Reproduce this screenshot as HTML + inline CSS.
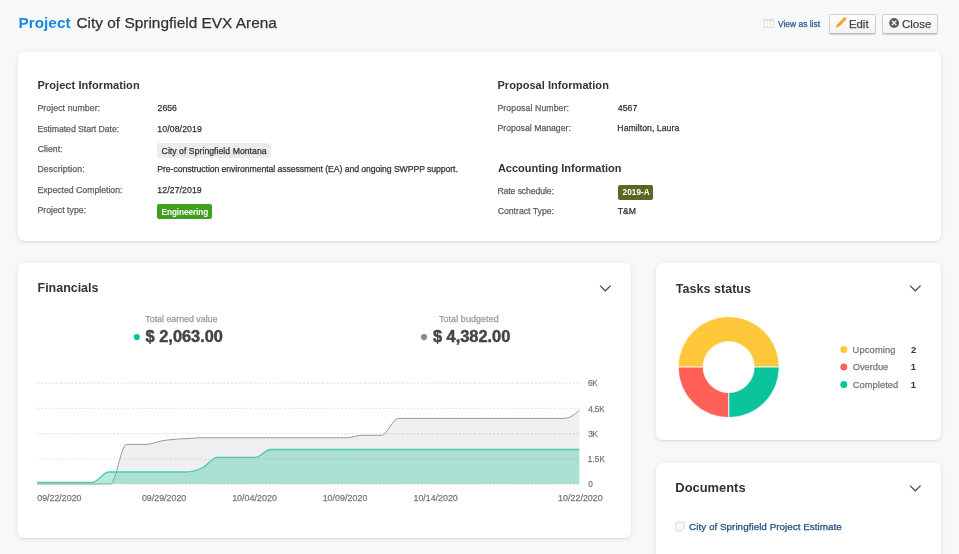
<!DOCTYPE html>
<html><head><meta charset="utf-8"><style>
html,body{margin:0;padding:0;}
body{width:959px;height:554px;overflow:hidden;background:#f8f8f8;position:relative;font-family:"Liberation Sans",sans-serif;}
.card{position:absolute;background:#fff;border-radius:6px;box-shadow:0 1px 2px rgba(0,0,0,0.07),0 1px 6px rgba(0,0,0,0.07);}
.t{position:absolute;white-space:nowrap;}
.r{-webkit-text-stroke:0.25px currentColor;}
#tx{position:absolute;left:0;top:0;width:959px;height:554px;will-change:transform;}
.btn{position:absolute;box-sizing:border-box;border:1px solid #cfcfcf;border-bottom-color:#bdbdbd;border-radius:2px;background:linear-gradient(#fdfdfd,#f3f3f3);box-shadow:0 1px 1px rgba(0,0,0,0.15);}
.badge{position:absolute;border-radius:2px;}
svg{position:absolute;left:0;top:0;}
</style></head><body>
<div class="card" style="left:18px;top:52px;width:923px;height:189px;"></div>
<div class="card" style="left:18px;top:263px;width:613px;height:275px;"></div>
<div class="card" style="left:656px;top:263px;width:285px;height:177px;"></div>
<div class="card" style="left:656px;top:463px;width:285px;height:120px;"></div>
<div class="btn" style="left:829px;top:14px;width:47px;height:19.6px;"></div>
<div class="btn" style="left:882px;top:14px;width:56px;height:19.6px;"></div>
<div class="badge" style="left:157px;top:143px;width:113.5px;height:15px;background:#ececec;"></div>
<div class="badge" style="left:157px;top:204px;width:55px;height:15px;background:#41a01f;"></div>
<div class="badge" style="left:618px;top:184.5px;width:35px;height:15px;background:#5d6625;"></div>
<svg width="959" height="554" viewBox="0 0 959 554">
<path d="M37,484 C61.47,484.00 85.93,484.00 110.4,484 C115.77,484.00 121.13,444.40 126.5,444.4 C133.00,444.40 139.50,444.40 146,444.4 C151.67,444.40 157.33,441.50 163,440.6 C172.67,439.07 182.33,438.94 192,438.3 C194.67,438.12 197.33,437.80 200,437.8 C248.77,437.80 297.53,437.80 346.3,437.8 C351.53,437.80 356.77,435.30 362,435.3 C368.43,435.30 374.87,435.30 381.3,435.3 C387.03,435.30 392.77,418.40 398.5,418.4 C453.57,418.40 508.63,418.40 563.7,418.4 C570,418.4 574,415 579.3,410.3 L579.3,484 L37,484 Z" fill="#efefef"/>
<path d="M37,484 C61.47,484.00 85.93,484.00 110.4,484 C115.77,484.00 121.13,444.40 126.5,444.4 C133.00,444.40 139.50,444.40 146,444.4 C151.67,444.40 157.33,441.50 163,440.6 C172.67,439.07 182.33,438.94 192,438.3 C194.67,438.12 197.33,437.80 200,437.8 C248.77,437.80 297.53,437.80 346.3,437.8 C351.53,437.80 356.77,435.30 362,435.3 C368.43,435.30 374.87,435.30 381.3,435.3 C387.03,435.30 392.77,418.40 398.5,418.4 C453.57,418.40 508.63,418.40 563.7,418.4 C570,418.4 574,415 579.3,410.3 " fill="none" stroke="#9a9a9a" stroke-width="1"/>
<path d="M37,482.5 C55.40,482.50 73.80,482.50 92.2,482.5 C97.73,482.50 103.27,472.00 108.8,472 C134.37,472.00 159.93,472.00 185.5,472 C191.33,472.00 197.17,470.50 203,467.5 C207.67,465.10 212.33,457.30 217,457.3 C229.80,457.30 242.60,457.30 255.4,457.3 C260.43,457.30 265.47,449.50 270.5,449.5 C373.43,449.50 476.37,449.50 579.3,449.5 L579.3,484 L37,484 Z" fill="rgba(50,200,165,0.36)"/>
<line x1="37" y1="383.1" x2="579.5" y2="383.1" stroke="rgba(0,0,0,0.10)" stroke-width="1.2" stroke-dasharray="2.2,1.6"/><line x1="37" y1="408.4" x2="579.5" y2="408.4" stroke="rgba(0,0,0,0.10)" stroke-width="1.2" stroke-dasharray="2.2,1.6"/><line x1="37" y1="433.7" x2="579.5" y2="433.7" stroke="rgba(0,0,0,0.10)" stroke-width="1.2" stroke-dasharray="2.2,1.6"/><line x1="37" y1="459.0" x2="579.5" y2="459.0" stroke="rgba(0,0,0,0.10)" stroke-width="1.2" stroke-dasharray="2.2,1.6"/>
<path d="M37,482.5 C55.40,482.50 73.80,482.50 92.2,482.5 C97.73,482.50 103.27,472.00 108.8,472 C134.37,472.00 159.93,472.00 185.5,472 C191.33,472.00 197.17,470.50 203,467.5 C207.67,465.10 212.33,457.30 217,457.3 C229.80,457.30 242.60,457.30 255.4,457.3 C260.43,457.30 265.47,449.50 270.5,449.5 C373.43,449.50 476.37,449.50 579.3,449.5 " fill="none" stroke="#52c9aa" stroke-width="1.3"/>
<line x1="37" y1="484.2" x2="579.3" y2="484.2" stroke="#ccc" stroke-width="0.8" stroke-dasharray="2,1.8"/>
<path d="M678.20,367.10 A50.5,50.5 0 0 1 779.20,367.10 L754.20,367.10 A25.5,25.5 0 0 0 703.20,367.10 Z" fill="#ffc73a" stroke="#fff" stroke-width="0.8"/><path d="M779.20,367.10 A50.5,50.5 0 0 1 728.70,417.60 L728.70,392.60 A25.5,25.5 0 0 0 754.20,367.10 Z" fill="#0cc49b" stroke="#fff" stroke-width="0.8"/><path d="M728.70,417.60 A50.5,50.5 0 0 1 678.20,367.10 L703.20,367.10 A25.5,25.5 0 0 0 728.70,392.60 Z" fill="#ff6159" stroke="#fff" stroke-width="0.8"/>
<circle cx="136.8" cy="337.1" r="3.1" fill="#0cc49b"/>
<circle cx="424" cy="337.1" r="3.1" fill="#8c8c8c"/>
<circle cx="843.8" cy="349.4" r="3.5" fill="#ffc73a"/>
<circle cx="843.8" cy="367.0" r="3.5" fill="#ff6159"/>
<circle cx="843.8" cy="384.4" r="3.5" fill="#0cc49b"/>
<path d="M600,285.6 L605.3,290.8 L610.6,285.6" fill="none" stroke="#4a4a4a" stroke-width="1.3"/>
<path d="M910,285.6 L915.3,290.8 L920.6,285.6" fill="none" stroke="#4a4a4a" stroke-width="1.3"/>
<path d="M910,485.6 L915.3,490.8 L920.6,485.6" fill="none" stroke="#4a4a4a" stroke-width="1.3"/>
<!-- pencil -->
<path d="M837.9,25.7 L842.5,21.1" stroke="#f9a11b" stroke-width="3"/><path d="M843.5,20.1 L844.7,18.9" stroke="#f9a11b" stroke-width="3" stroke-linecap="round"/><path d="M835.8,27.7 L836.8,24.7 L838.9,26.8 Z" fill="#f9a11b"/>
<!-- close circle -->
<circle cx="894.1" cy="22.95" r="4.95" fill="#5e5e5e"/>
<path d="M891.9,20.75 L896.3,25.15 M896.3,20.75 L891.9,25.15" stroke="#f4f4f4" stroke-width="1.3"/>
<!-- list icon -->
<rect x="764.1" y="19.7" width="9" height="7.6" fill="#fff" stroke="#dcdcdc" stroke-width="1"/><rect x="763.6" y="19.2" width="10" height="1.6" fill="#dcdcdc"/><path d="M767.1,20.5 V27 M770.4,20.5 V27" stroke="#e2e2e2" stroke-width="0.9"/>
<!-- doc icon -->
<path d="M677,522 H683 Q684.1,522 684.1,523.1 V528.2 L680.8,531 H677 Q675.9,531 675.9,529.9 V523.1 Q675.9,522 677,522 Z" fill="#f8f8f8" stroke="#d9d9d9" stroke-width="1"/>
</svg>
<div id="tx">
<span class="t" style="left:18.50px;top:15.35px;font-size:15.3px;line-height:15.3px;font-weight:700;color:#1b88e2;letter-spacing:0.025px;">Project</span>
<span class="t r" style="left:76.45px;top:15.26px;font-size:15.4px;line-height:15.4px;font-weight:400;color:#333;letter-spacing:0.011px;">City of Springfield EVX Arena</span>
<span class="t r" style="left:778.00px;top:19.64px;font-size:8.4px;line-height:8.4px;font-weight:400;color:#2b5b8e;letter-spacing:0.027px;">View as list</span>
<span class="t r" style="left:848.90px;top:18.65px;font-size:11.4px;line-height:11.4px;font-weight:400;color:#444;letter-spacing:0.017px;">Edit</span>
<span class="t r" style="left:901.90px;top:18.65px;font-size:11.4px;line-height:11.4px;font-weight:400;color:#444;letter-spacing:0.062px;">Close</span>
<span class="t" style="left:37.45px;top:79.89px;font-size:11.0px;line-height:11.0px;font-weight:700;color:#333;letter-spacing:0.075px;">Project Information</span>
<span class="t" style="left:497.45px;top:79.89px;font-size:11.0px;line-height:11.0px;font-weight:700;color:#333;letter-spacing:0.042px;">Proposal Information</span>
<span class="t" style="left:497.95px;top:162.59px;font-size:11.0px;line-height:11.0px;font-weight:700;color:#333;letter-spacing:-0.021px;">Accounting Information</span>
<span class="t r" style="left:37.45px;top:103.74px;font-size:8.7px;line-height:8.7px;font-weight:400;color:#5e5e5e;letter-spacing:0.093px;">Project number:</span>
<span class="t r" style="left:157.60px;top:103.74px;font-size:8.7px;line-height:8.7px;font-weight:400;color:#333;letter-spacing:-0.017px;">2656</span>
<span class="t r" style="left:37.45px;top:124.64px;font-size:8.7px;line-height:8.7px;font-weight:400;color:#5e5e5e;letter-spacing:-0.043px;">Estimated Start Date:</span>
<span class="t r" style="left:157.35px;top:124.64px;font-size:8.7px;line-height:8.7px;font-weight:400;color:#333;letter-spacing:0.106px;">10/08/2019</span>
<span class="t r" style="left:37.70px;top:144.54px;font-size:8.7px;line-height:8.7px;font-weight:400;color:#5e5e5e;letter-spacing:0.050px;">Client:</span>
<span class="t r" style="left:37.45px;top:165.34px;font-size:8.7px;line-height:8.7px;font-weight:400;color:#5e5e5e;letter-spacing:0.114px;">Description:</span>
<span class="t r" style="left:157.35px;top:165.34px;font-size:8.7px;line-height:8.7px;font-weight:400;color:#333;letter-spacing:-0.083px;">Pre-construction environmental assessment (EA) and ongoing SWPPP support.</span>
<span class="t r" style="left:37.45px;top:185.54px;font-size:8.7px;line-height:8.7px;font-weight:400;color:#5e5e5e;letter-spacing:0.000px;">Expected Completion:</span>
<span class="t r" style="left:157.35px;top:185.54px;font-size:8.7px;line-height:8.7px;font-weight:400;color:#333;letter-spacing:0.094px;">12/27/2019</span>
<span class="t r" style="left:37.45px;top:206.04px;font-size:8.7px;line-height:8.7px;font-weight:400;color:#5e5e5e;letter-spacing:0.029px;">Project type:</span>
<span class="t r" style="left:161.60px;top:147.14px;font-size:8.7px;line-height:8.7px;font-weight:400;color:#333;letter-spacing:0.027px;">City of Springfield Montana</span>
<span class="t" style="left:161.60px;top:209.06px;font-size:8.2px;line-height:8.2px;font-weight:700;color:#fff;letter-spacing:-0.065px;">Engineering</span>
<span class="t r" style="left:497.45px;top:103.54px;font-size:8.7px;line-height:8.7px;font-weight:400;color:#5e5e5e;letter-spacing:0.097px;">Proposal Number:</span>
<span class="t r" style="left:617.85px;top:103.54px;font-size:8.7px;line-height:8.7px;font-weight:400;color:#333;letter-spacing:0.050px;">4567</span>
<span class="t r" style="left:497.45px;top:124.24px;font-size:8.7px;line-height:8.7px;font-weight:400;color:#5e5e5e;letter-spacing:0.000px;">Proposal Manager:</span>
<span class="t r" style="left:617.35px;top:124.24px;font-size:8.7px;line-height:8.7px;font-weight:400;color:#333;letter-spacing:0.039px;">Hamilton, Laura</span>
<span class="t r" style="left:497.45px;top:186.84px;font-size:8.7px;line-height:8.7px;font-weight:400;color:#5e5e5e;letter-spacing:-0.115px;">Rate schedule:</span>
<span class="t r" style="left:497.70px;top:207.34px;font-size:8.7px;line-height:8.7px;font-weight:400;color:#5e5e5e;letter-spacing:0.000px;">Contract Type:</span>
<span class="t r" style="left:617.85px;top:207.34px;font-size:8.7px;line-height:8.7px;font-weight:400;color:#333;letter-spacing:-0.050px;">T&amp;M</span>
<span class="t" style="left:622.55px;top:189.16px;font-size:8.2px;line-height:8.2px;font-weight:700;color:#fff;letter-spacing:0.070px;">2019-A</span>
<span class="t" style="left:37.55px;top:282.12px;font-size:12.5px;line-height:12.5px;font-weight:700;color:#333;letter-spacing:-0.028px;">Financials</span>
<span class="t r" style="left:145.35px;top:315.27px;font-size:8.9px;line-height:8.9px;font-weight:400;color:#999;letter-spacing:-0.026px;">Total earned value</span>
<span class="t" style="left:145.60px;top:328.02px;font-size:16.4px;line-height:16.4px;font-weight:700;color:#444;letter-spacing:-0.011px;-webkit-text-stroke:0.45px currentColor;">$ 2,063.00</span>
<span class="t r" style="left:438.95px;top:315.27px;font-size:8.9px;line-height:8.9px;font-weight:400;color:#999;letter-spacing:0.115px;">Total budgeted</span>
<span class="t" style="left:432.90px;top:328.02px;font-size:16.4px;line-height:16.4px;font-weight:700;color:#444;letter-spacing:-0.011px;-webkit-text-stroke:0.45px currentColor;">$ 4,382.00</span>
<span class="t r" style="left:587.90px;top:380.26px;font-size:8.2px;line-height:8.2px;font-weight:400;color:#777;letter-spacing:-0.200px;">6K</span>
<span class="t r" style="left:588.15px;top:405.56px;font-size:8.2px;line-height:8.2px;font-weight:400;color:#777;letter-spacing:-0.050px;">4.5K</span>
<span class="t r" style="left:588.15px;top:430.86px;font-size:8.2px;line-height:8.2px;font-weight:400;color:#777;letter-spacing:-0.450px;">3K</span>
<span class="t r" style="left:587.65px;top:456.16px;font-size:8.2px;line-height:8.2px;font-weight:400;color:#777;letter-spacing:0.167px;">1.5K</span>
<span class="t r" style="left:588.15px;top:481.46px;font-size:8.2px;line-height:8.2px;font-weight:400;color:#777;letter-spacing:0.000px;">0</span>
<span class="t r" style="left:37.25px;top:493.97px;font-size:8.9px;line-height:8.9px;font-weight:400;color:#777;letter-spacing:-0.017px;">09/22/2020</span>
<span class="t r" style="left:141.95px;top:493.97px;font-size:8.9px;line-height:8.9px;font-weight:400;color:#777;letter-spacing:-0.011px;">09/29/2020</span>
<span class="t r" style="left:232.15px;top:493.97px;font-size:8.9px;line-height:8.9px;font-weight:400;color:#777;letter-spacing:0.033px;">10/04/2020</span>
<span class="t r" style="left:322.65px;top:493.97px;font-size:8.9px;line-height:8.9px;font-weight:400;color:#777;letter-spacing:0.028px;">10/09/2020</span>
<span class="t r" style="left:413.55px;top:493.97px;font-size:8.9px;line-height:8.9px;font-weight:400;color:#777;letter-spacing:-0.022px;">10/14/2020</span>
<span class="t r" style="left:558.05px;top:493.97px;font-size:8.9px;line-height:8.9px;font-weight:400;color:#777;letter-spacing:0.028px;">10/22/2020</span>
<span class="t" style="left:675.65px;top:282.52px;font-size:12.5px;line-height:12.5px;font-weight:700;color:#333;letter-spacing:0.050px;">Tasks status</span>
<span class="t r" style="left:852.55px;top:345.83px;font-size:9.3px;line-height:9.3px;font-weight:400;color:#777;letter-spacing:0.157px;">Upcoming</span>
<span class="t" style="left:910.95px;top:345.83px;font-size:9.3px;line-height:9.3px;font-weight:700;color:#333;letter-spacing:0.000px;">2</span>
<span class="t r" style="left:852.80px;top:363.23px;font-size:9.3px;line-height:9.3px;font-weight:400;color:#777;letter-spacing:-0.033px;">Overdue</span>
<span class="t" style="left:910.70px;top:363.23px;font-size:9.3px;line-height:9.3px;font-weight:700;color:#333;letter-spacing:0.000px;">1</span>
<span class="t r" style="left:852.80px;top:380.63px;font-size:9.3px;line-height:9.3px;font-weight:400;color:#777;letter-spacing:0.056px;">Completed</span>
<span class="t" style="left:910.70px;top:380.63px;font-size:9.3px;line-height:9.3px;font-weight:700;color:#333;letter-spacing:0.000px;">1</span>
<span class="t" style="left:675.35px;top:482.08px;font-size:12.9px;line-height:12.9px;font-weight:700;color:#333;letter-spacing:0.006px;">Documents</span>
<span class="t r" style="left:689.10px;top:522.22px;font-size:9.9px;line-height:9.9px;font-weight:400;color:#234f80;letter-spacing:0.020px;">City of Springfield Project Estimate</span>
</div>
</body></html>
